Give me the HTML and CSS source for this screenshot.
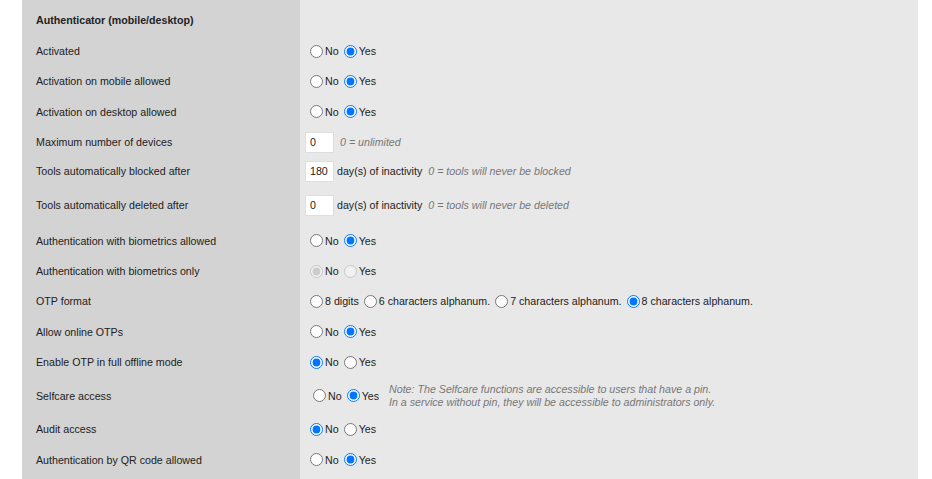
FILE: index.html
```html
<!DOCTYPE html>
<html>
<head>
<meta charset="utf-8">
<link rel="stylesheet" href="styles.css">
</head>
<body>
<div class="settings">
  <div class="label head">Authenticator (mobile/desktop)</div>
  <div class="value"></div>

  <div class="label">Activated</div>
  <div class="value"><div class="opts"><label><input type="radio" name="a1">No</label><label><input type="radio" name="a1" checked>Yes</label></div></div>

  <div class="label">Activation on mobile allowed</div>
  <div class="value"><div class="opts"><label><input type="radio" name="a2">No</label><label><input type="radio" name="a2" checked>Yes</label></div></div>

  <div class="label">Activation on desktop allowed</div>
  <div class="value"><div class="opts"><label><input type="radio" name="a3">No</label><label><input type="radio" name="a3" checked>Yes</label></div></div>

  <div class="label">Maximum number of devices</div>
  <div class="value"><input class="num" type="text" value="0"><span class="hint">0 = unlimited</span></div>

  <div class="label">Tools automatically blocked after</div>
  <div class="value"><input class="num" type="text" value="180"><span class="unit">day(s) of inactivity</span><span class="hint">0 = tools will never be blocked</span></div>

  <div class="label">Tools automatically deleted after</div>
  <div class="value"><input class="num" type="text" value="0"><span class="unit">day(s) of inactivity</span><span class="hint">0 = tools will never be deleted</span></div>

  <div class="label">Authentication with biometrics allowed</div>
  <div class="value"><div class="opts"><label><input type="radio" name="a4">No</label><label><input type="radio" name="a4" checked>Yes</label></div></div>

  <div class="label">Authentication with biometrics only</div>
  <div class="value"><div class="opts"><label><input type="radio" name="a5" checked disabled>No</label><label><input type="radio" name="a5" disabled>Yes</label></div></div>

  <div class="label">OTP format</div>
  <div class="value"><div class="opts"><label><input type="radio" name="a6">8 digits</label><label><input type="radio" name="a6">6 characters alphanum.</label><label><input type="radio" name="a6">7 characters alphanum.</label><label><input type="radio" name="a6" checked>8 characters alphanum.</label></div></div>

  <div class="label">Allow online OTPs</div>
  <div class="value"><div class="opts"><label><input type="radio" name="a7">No</label><label><input type="radio" name="a7" checked>Yes</label></div></div>

  <div class="label">Enable OTP in full offline mode</div>
  <div class="value"><div class="opts"><label><input type="radio" name="a8" checked>No</label><label><input type="radio" name="a8">Yes</label></div></div>

  <div class="label">Selfcare access</div>
  <div class="value"><div class="opts nested"><label><input type="radio" name="a9">No</label><label><input type="radio" name="a9" checked>Yes</label></div><div class="note">Note: The Selfcare functions are accessible to users that have a pin.<br>In a service without pin, they will be accessible to administrators only.</div></div>

  <div class="label">Audit access</div>
  <div class="value"><div class="opts"><label><input type="radio" name="a10" checked>No</label><label><input type="radio" name="a10">Yes</label></div></div>

  <div class="label">Authentication by QR code allowed</div>
  <div class="value"><div class="opts"><label><input type="radio" name="a11">No</label><label><input type="radio" name="a11" checked>Yes</label></div></div>

  <div class="label"></div>
  <div class="value"></div>
</div>
</body>
</html>
```

FILE: styles.css
```css
html, body {
  margin: 0;
  padding: 0;
  background: #ffffff;
}

body {
  font-family: "Liberation Sans", Arial, sans-serif;
  font-size: 8pt;
  color: #222;
}

.settings {
  display: grid;
  grid-template-columns: 278px 618px;
  grid-template-rows: 36px 30px 30px 31px 30px 28px 40px 31px 30px 30px 31px 30px 37px 30px 31px 40px;
  margin-left: 22px;
  width: 896px;
}

.label {
  background: #d3d3d3;
  padding-left: 14px;
  display: flex;
  align-items: center;
}

.label.head {
  font-weight: bold;
  padding-top: 4px;
}

.value {
  background: #e8e8e8;
  padding-left: 5px;
  display: flex;
  align-items: center;
}

.opts {
  display: flex;
  align-items: center;
}

.opts.nested {
  padding-left: 3px;
}

.opts label {
  display: flex;
  align-items: center;
}

.opts input {
  width: 13px;
  height: 13px;
  margin: 0 2px 0 5px;
}

.num {
  box-sizing: border-box;
  width: 29px;
  height: 21px;
  margin: 0;
  padding: 0 0 0 4px;
  border: 1px solid #dedede;
  background: #fff;
  font-family: "Liberation Sans", Arial, sans-serif;
  font-size: 8pt;
  color: #222;
  outline: none;
}

.unit {
  margin-left: 3px;
}

.hint {
  margin-left: 6px;
  font-style: italic;
  color: #777;
}

.note {
  margin-left: 10px;
  font-style: italic;
  color: #777;
  line-height: 13px;
}
```
